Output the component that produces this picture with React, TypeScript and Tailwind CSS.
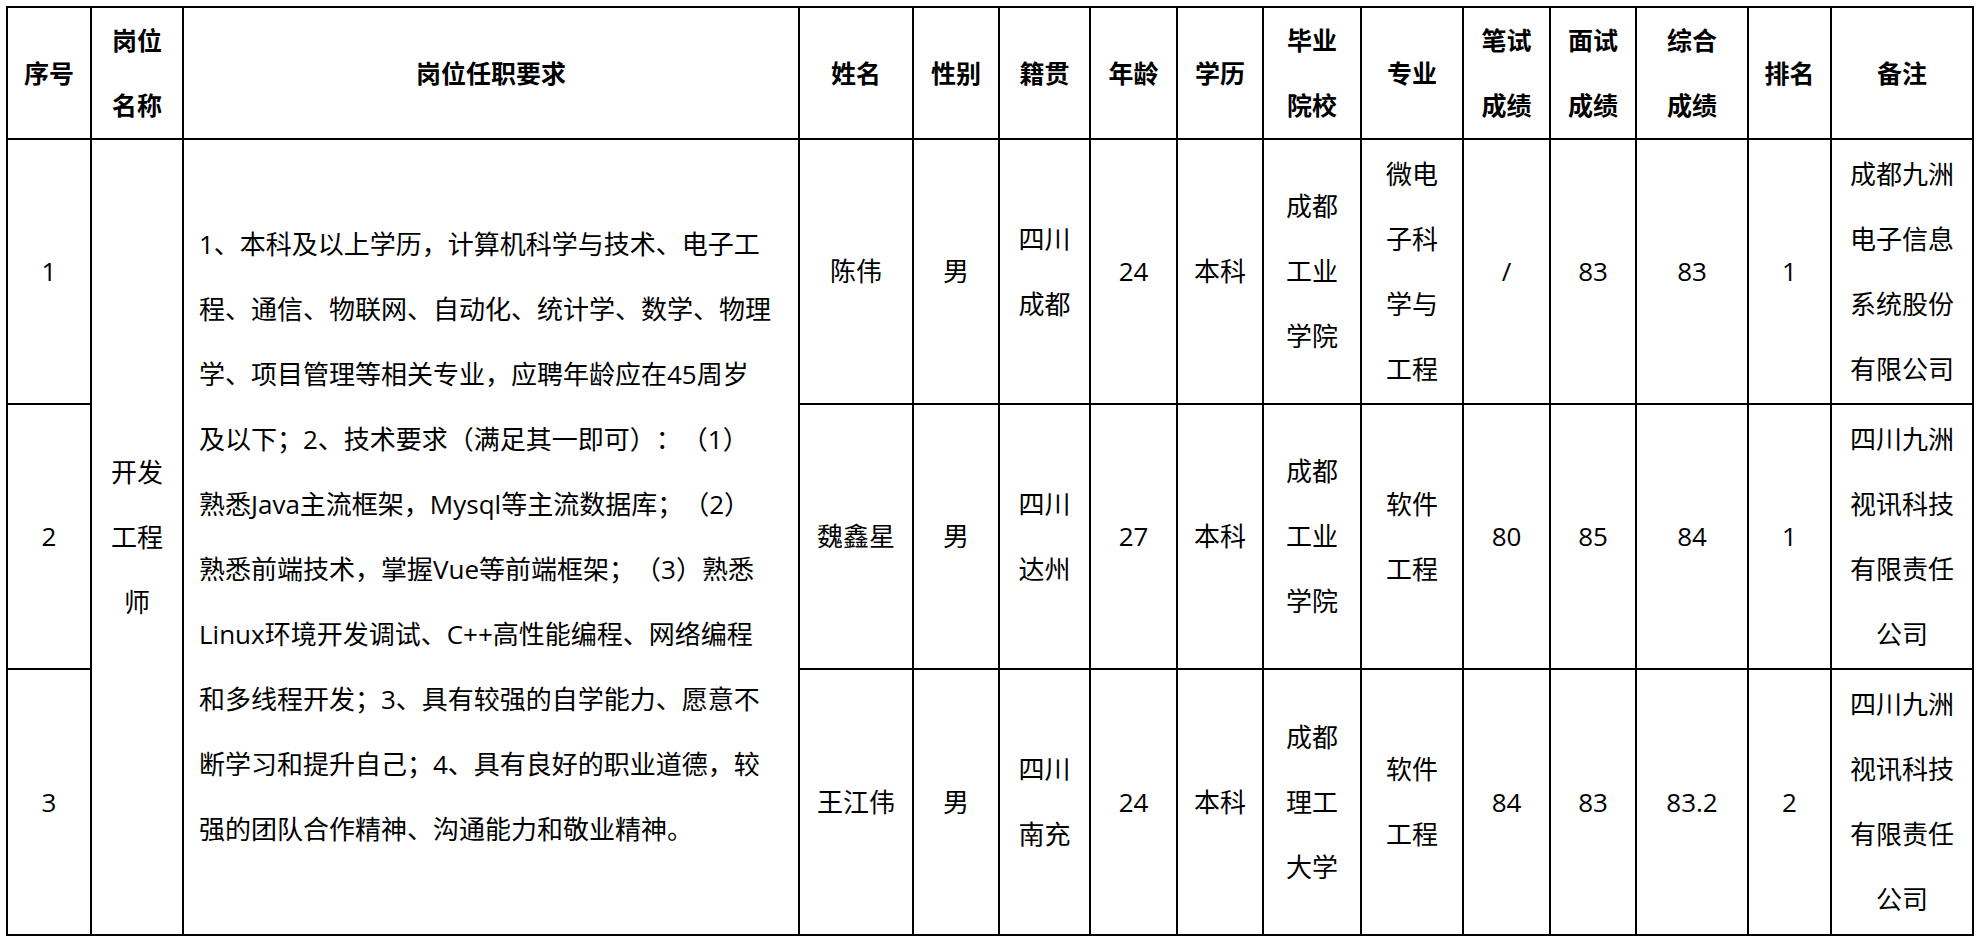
import React from "react";

type Row = {
  no: string;
  name: string;
  gender: string;
  origin: string[];
  age: string;
  degree: string;
  school: string[];
  major: string[];
  written: string;
  interview: string;
  total: string;
  rank: string;
  note: string[];
};

const requirements = [
  "1、本科及以上学历，计算机科学与技术、电子工",
  "程、通信、物联网、自动化、统计学、数学、物理",
  "学、项目管理等相关专业，应聘年龄应在45周岁",
  "及以下；2、技术要求（满足其一即可）：（1）",
  "熟悉Java主流框架，Mysql等主流数据库；（2）",
  "熟悉前端技术，掌握Vue等前端框架；（3）熟悉",
  "Linux环境开发调试、C++高性能编程、网络编程",
  "和多线程开发；3、具有较强的自学能力、愿意不",
  "断学习和提升自己；4、具有良好的职业道德，较",
  "强的团队合作精神、沟通能力和敬业精神。",
];

const rows: Row[] = [
  {
    no: "1",
    name: "陈伟",
    gender: "男",
    origin: ["四川", "成都"],
    age: "24",
    degree: "本科",
    school: ["成都", "工业", "学院"],
    major: ["微电", "子科", "学与", "工程"],
    written: "/",
    interview: "83",
    total: "83",
    rank: "1",
    note: ["成都九洲", "电子信息", "系统股份", "有限公司"],
  },
  {
    no: "2",
    name: "魏鑫星",
    gender: "男",
    origin: ["四川", "达州"],
    age: "27",
    degree: "本科",
    school: ["成都", "工业", "学院"],
    major: ["软件", "工程"],
    written: "80",
    interview: "85",
    total: "84",
    rank: "1",
    note: ["四川九洲", "视讯科技", "有限责任", "公司"],
  },
  {
    no: "3",
    name: "王江伟",
    gender: "男",
    origin: ["四川", "南充"],
    age: "24",
    degree: "本科",
    school: ["成都", "理工", "大学"],
    major: ["软件", "工程"],
    written: "84",
    interview: "83",
    total: "83.2",
    rank: "2",
    note: ["四川九洲", "视讯科技", "有限责任", "公司"],
  },
];

// stacked lines inside a cell
const Lines = ({ items }: { items: string[] }) => (
  <>
    {items.map((t, i) => (
      <div key={i} className="whitespace-nowrap">
        {t}
      </div>
    ))}
  </>
);

const th = "border-2 border-black p-0 text-center align-middle font-bold";
const td = "border-2 border-black p-0 text-center align-middle";

export default function App() {
  return (
    <div className="min-h-[940px] w-[1981px] bg-white pl-[6px] pt-[6px] font-['Open_Sans','Noto_Sans_CJK_SC',sans-serif] text-[26px] leading-[65px] text-black [text-spacing-trim:space-all]">
      <table className="w-[1968px] table-fixed border-collapse">
        <colgroup>
          <col className="w-[84px]" />
          <col className="w-[92px]" />
          <col className="w-[616px]" />
          <col className="w-[114px]" />
          <col className="w-[86px]" />
          <col className="w-[91px]" />
          <col className="w-[87px]" />
          <col className="w-[86px]" />
          <col className="w-[98px]" />
          <col className="w-[102px]" />
          <col className="w-[87px]" />
          <col className="w-[86px]" />
          <col className="w-[112px]" />
          <col className="w-[83px]" />
          <col className="w-[142px]" />
        </colgroup>
        <thead>
          <tr className="h-[132px] text-[25px]">
            <th className={th}>序号</th>
            <th className={th}>
              <Lines items={["岗位", "名称"]} />
            </th>
            <th className={th}>岗位任职要求</th>
            <th className={th}>姓名</th>
            <th className={th}>性别</th>
            <th className={th}>籍贯</th>
            <th className={th}>年龄</th>
            <th className={th}>学历</th>
            <th className={th}>
              <Lines items={["毕业", "院校"]} />
            </th>
            <th className={th}>专业</th>
            <th className={th}>
              <Lines items={["笔试", "成绩"]} />
            </th>
            <th className={th}>
              <Lines items={["面试", "成绩"]} />
            </th>
            <th className={th}>
              <Lines items={["综合", "成绩"]} />
            </th>
            <th className={th}>排名</th>
            <th className={th}>备注</th>
          </tr>
        </thead>
        <tbody>
          {rows.map((r, i) => (
            <tr key={r.no} className={i === 2 ? "h-[266px]" : "h-[265px]"}>
              <td className={td}>{r.no}</td>
              {i === 0 && (
                <>
                  <td className={td} rowSpan={3}>
                    <Lines items={["开发", "工程", "师"]} />
                  </td>
                  <td className="border-2 border-black py-0 pl-[15px] pr-0 text-left align-middle" rowSpan={3}>
                    <Lines items={requirements} />
                  </td>
                </>
              )}
              <td className={td}>{r.name}</td>
              <td className={td}>{r.gender}</td>
              <td className={td}>
                <Lines items={r.origin} />
              </td>
              <td className={td}>{r.age}</td>
              <td className={td}>{r.degree}</td>
              <td className={td}>
                <Lines items={r.school} />
              </td>
              <td className={td}>
                <Lines items={r.major} />
              </td>
              <td className={td}>{r.written}</td>
              <td className={td}>{r.interview}</td>
              <td className={td}>{r.total}</td>
              <td className={td}>{r.rank}</td>
              <td className={td}>
                <Lines items={r.note} />
              </td>
            </tr>
          ))}
        </tbody>
      </table>
    </div>
  );
}
